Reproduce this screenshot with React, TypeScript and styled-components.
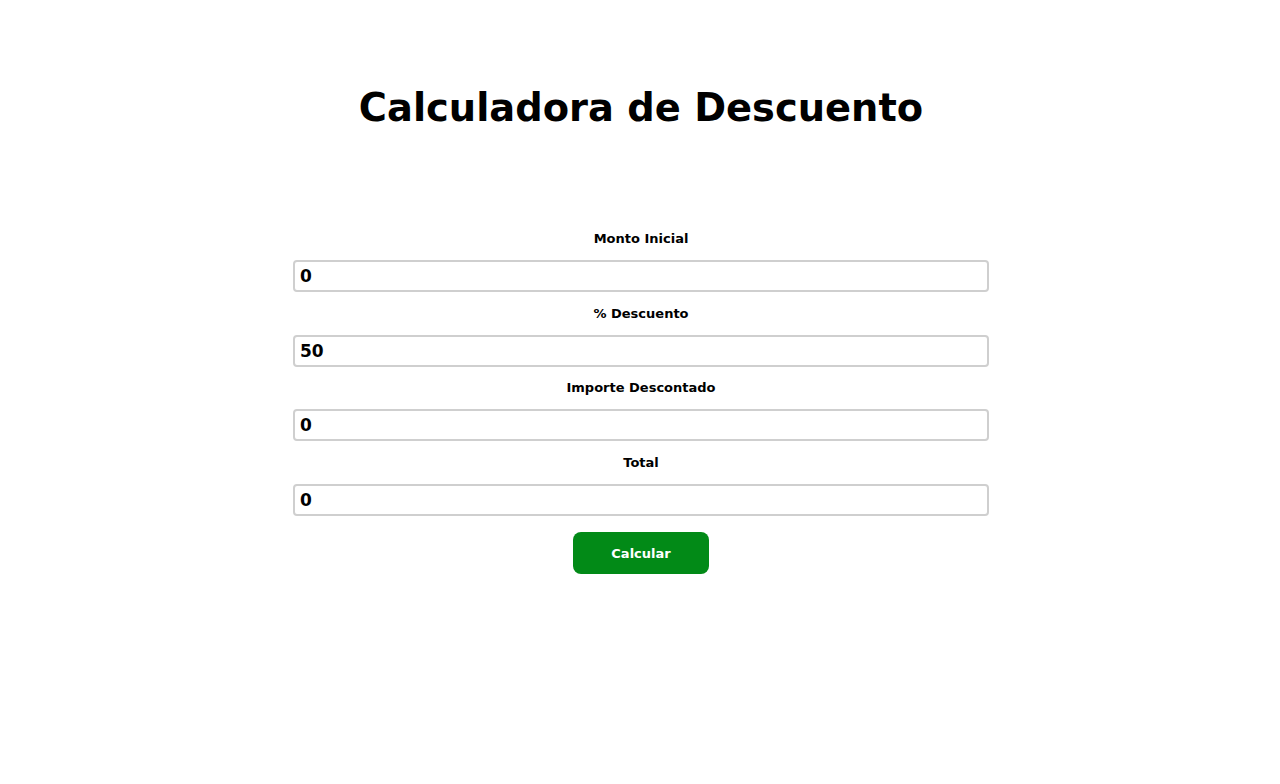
import React, { useState } from "react";
import styled, { createGlobalStyle } from "styled-components";

const Global = createGlobalStyle`
  * { box-sizing: border-box; }
  body { margin: 0; background: #fff; font-family: "DejaVu Sans", "Noto Sans", sans-serif; color: #000; }
`;

const Page = styled.main`
  display: flex;
  flex-direction: column;
  align-items: center;
  padding: 82px 0 0 2px;
`;

const Title = styled.h1`
  margin: 0;
  font-size: 38.4px;
  font-weight: 700;
  line-height: 52px;
`;

const Form = styled.form`
  width: 696px;
  margin-top: 97px;
  display: flex;
  flex-direction: column;
  align-items: center;
`;

const Label = styled.label`
  font-size: 13px;
  font-weight: 700;
  line-height: 16px;
  margin-bottom: 13px;
  text-align: center;
`;

const Input = styled.input`
  width: 100%;
  height: 32px;
  border: 2px solid #cfcfcf;
  border-radius: 4px;
  padding: 0 5px;
  font-family: inherit;
  font-size: 17px;
  font-weight: 700;
  color: #000;
  margin-bottom: 13.5px;
  outline: none;
`;

const Button = styled.button`
  width: 136px;
  height: 42px;
  margin-top: 3px;
  background: #028a17;
  color: #fff;
  border: none;
  border-radius: 8px;
  font-family: inherit;
  font-size: 13px;
  font-weight: 700;
`;

export default function App() {
  const [monto] = useState("0");
  const fields = [
    ["Monto Inicial", monto],
    ["% Descuento", "50"],
    ["Importe Descontado", "0"],
    ["Total", "0"],
  ];
  return (
    <>
      <Global />
      <Page>
        <Title>Calculadora de Descuento</Title>
        <Form onSubmit={(e) => e.preventDefault()}>
          {fields.map(([l, v]) => (
            <React.Fragment key={l}>
              <Label>{l}</Label>
              <Input defaultValue={v} />
            </React.Fragment>
          ))}
          <Button type="submit">Calcular</Button>
        </Form>
      </Page>
    </>
  );
}
